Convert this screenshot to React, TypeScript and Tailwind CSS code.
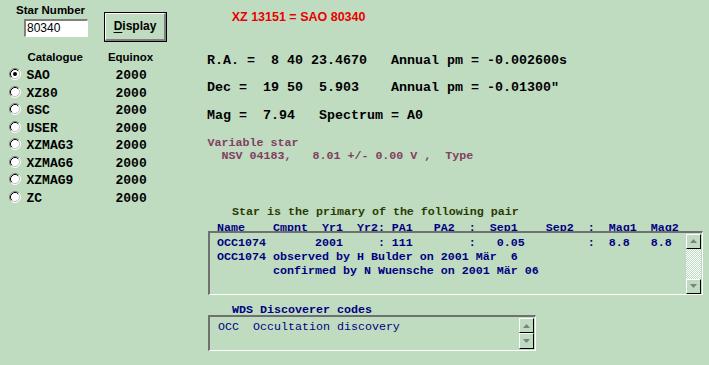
import React from "react";

const mono = "font-['Liberation_Mono','Courier_New',monospace]";
const sans = "font-['Liberation_Sans',Arial,sans-serif]";

const catalogues = ["SAO", "XZ80", "GSC", "USER", "XZMAG3", "XZMAG6", "XZMAG9", "ZC"];

const Radio = ({ checked }: { checked: boolean }) => (
  <svg width="12" height="12" viewBox="0 0 12 12" className="shrink-0 mt-[1px]">
    <circle cx="6" cy="6" r="5" fill="#ffffff" />
    <path d="M 2.11 9.89 A 5.5 5.5 0 0 1 9.89 2.11" stroke="#808080" strokeWidth="1" fill="none" />
    <path d="M 9.89 2.11 A 5.5 5.5 0 0 1 2.11 9.89" stroke="#ffffff" strokeWidth="1" fill="none" />
    <path d="M 2.82 9.18 A 4.5 4.5 0 0 1 9.18 2.82" stroke="#000000" strokeWidth="1" fill="none" />
    <path d="M 9.18 2.82 A 4.5 4.5 0 0 1 2.82 9.18" stroke="#c0c0c0" strokeWidth="1" fill="none" />
    {checked && <circle cx="6" cy="6" r="2" fill="#000000" />}
  </svg>
);

const ArrowButton = ({ dir, h }: { dir: "up" | "down"; h: string }) => (
  <div className={`w-[15px] ${h} border-t border-l border-white border-r border-b border-r-black border-b-black bg-[#c0dcc0] flex items-center justify-center`}>
    <svg width="7" height="4" viewBox="0 0 7 4">
      {dir === "up" ? (
        <polygon points="3.5,0 7,4 0,4" fill="#808080" />
      ) : (
        <polygon points="0,0 7,0 3.5,4" fill="#808080" />
      )}
    </svg>
  </div>
);

export default function App() {
  return (
    <div className="w-[709px] h-[365px] bg-[#c0dcc0] flex overflow-hidden text-black">
      {/* left column */}
      <div className="w-[200px] shrink-0 flex flex-col">
        <div className="flex">
          <div className="w-[104px] flex flex-col">
            <div className={`${sans} font-bold text-[11.5px] leading-[13px] ml-[16px] mt-[3.6px]`}>Star Number</div>
            <div className="ml-[24px] mt-[2.4px] w-[64px] h-[18px] bg-white border-t-2 border-l-2 border-[#808080] border-r border-b border-r-white border-b-white flex items-center">
              <span className={`${sans} text-[12px] leading-[14px] pl-[1px]`}>80340</span>
            </div>
          </div>
          <div className="mt-[11.7px] w-[63px] h-[30px] border border-black">
            <div className="w-full h-full border-t border-l border-white border-r-2 border-b-2 border-r-[#808080] border-b-[#808080] flex items-center justify-center">
              <span className={`${sans} font-bold text-[12px] leading-[14px]`}>
                <span className="underline underline-offset-2">D</span>isplay
              </span>
            </div>
          </div>
        </div>

        <div className={`${sans} font-bold text-[11.5px] leading-[13px] flex mt-[9.5px]`}>
          <span className="ml-[27.4px] w-[80.5px]">Catalogue</span>
          <span>Equinox</span>
        </div>

        <div className="flex flex-col mt-[3.15px]">
          {catalogues.map((c, i) => (
            <div key={c} className="flex items-start h-[17.5px] pl-[9px]">
              <Radio checked={i === 0} />
              <span className={`${mono} font-bold text-[13px] leading-[17.5px] ml-[5.5px] w-[89px]`}>{c}</span>
              <span className={`${mono} font-bold text-[13px] leading-[17.5px]`}>2000</span>
            </div>
          ))}
        </div>
      </div>

      {/* right column */}
      <div className="flex-1 flex flex-col">
        <div className={`${sans} font-bold text-[12.5px] leading-[15px] text-[#e80000] ml-[31.7px] mt-[10px]`}>
          XZ 13151 = SAO 80340
        </div>

        <div className={`${mono} font-bold text-[13.33px] leading-[27.5px] whitespace-pre ml-[7px] mt-[21.5px]`}>
          <div>R.A. =  8 40 23.4670   Annual pm = -0.002600s</div>
          <div>Dec =  19 50  5.903    Annual pm = -0.01300"</div>
          <div>Mag =  7.94   Spectrum = A0</div>
        </div>

        <div className={`${mono} font-bold text-[11.67px] leading-[13px] whitespace-pre text-[#804060] ml-[7.5px] mt-[8.4px]`}>
          <div>Variable star</div>
          <div>  NSV 04183,   8.01 +/- 0.00 V ,  Type</div>
        </div>

        <div className={`${mono} font-bold text-[11.67px] leading-[14px] whitespace-pre text-[#2a3a00] ml-[32px] mt-[41.5px]`}>
          Star is the primary of the following pair
        </div>

        <div className={`${mono} font-bold text-[11.67px] leading-[8px] whitespace-pre text-[#000080] ml-[17px] mt-[5px]`}>
          Name    Cmpnt  Yr1  Yr2: PA1   PA2  :  Sep1    Sep2  :  Mag1  Mag2
        </div>

        <div className="ml-[8px] mt-[-1px] w-[495px] h-[64px] border-t-2 border-l-2 border-[#707070] border-r border-b border-r-white border-b-white flex">
          <div className={`flex-1 ${mono} font-bold text-[11.67px] leading-[14px] whitespace-pre text-[#000080] pl-[7px] pt-[3px]`}>
            <div>OCC1074       2001     : 111        :   0.05         :  8.8   8.8</div>
            <div>OCC1074 observed by H Bulder on 2001 Mär  6</div>
            <div>        confirmed by N Wuensche on 2001 Mär 06</div>
          </div>
          <div className="w-[16px] flex flex-col pt-[1px] pb-[0px]">
            <ArrowButton dir="up" h="h-[15px]" />
            <div className="flex-1 bg-[repeating-conic-gradient(#ffffff_0%_25%,#c0dcc0_0%_50%)] bg-size-[2px_2px] w-[15px]" />
            <ArrowButton dir="down" h="h-[15px]" />
          </div>
        </div>

        <div className={`${mono} font-bold text-[11.67px] leading-[10px] whitespace-pre text-[#000080] ml-[32px] mt-[10.3px]`}>
          WDS Discoverer codes
        </div>

        <div className="ml-[8px] w-[328px] h-[36px] border-t-2 border-l-2 border-[#707070] border-r border-b border-r-white border-b-white flex">
          <div className={`flex-1 ${mono} text-[11.67px] leading-[14px] whitespace-pre text-[#000080] pl-[8px] pt-[3.3px]`}>
            OCC  Occultation discovery
          </div>
          <div className="w-[16px] flex flex-col pt-[1px]">
            <ArrowButton dir="up" h="h-[15px]" />
            <ArrowButton dir="down" h="h-[16px]" />
          </div>
        </div>
      </div>
    </div>
  );
}
